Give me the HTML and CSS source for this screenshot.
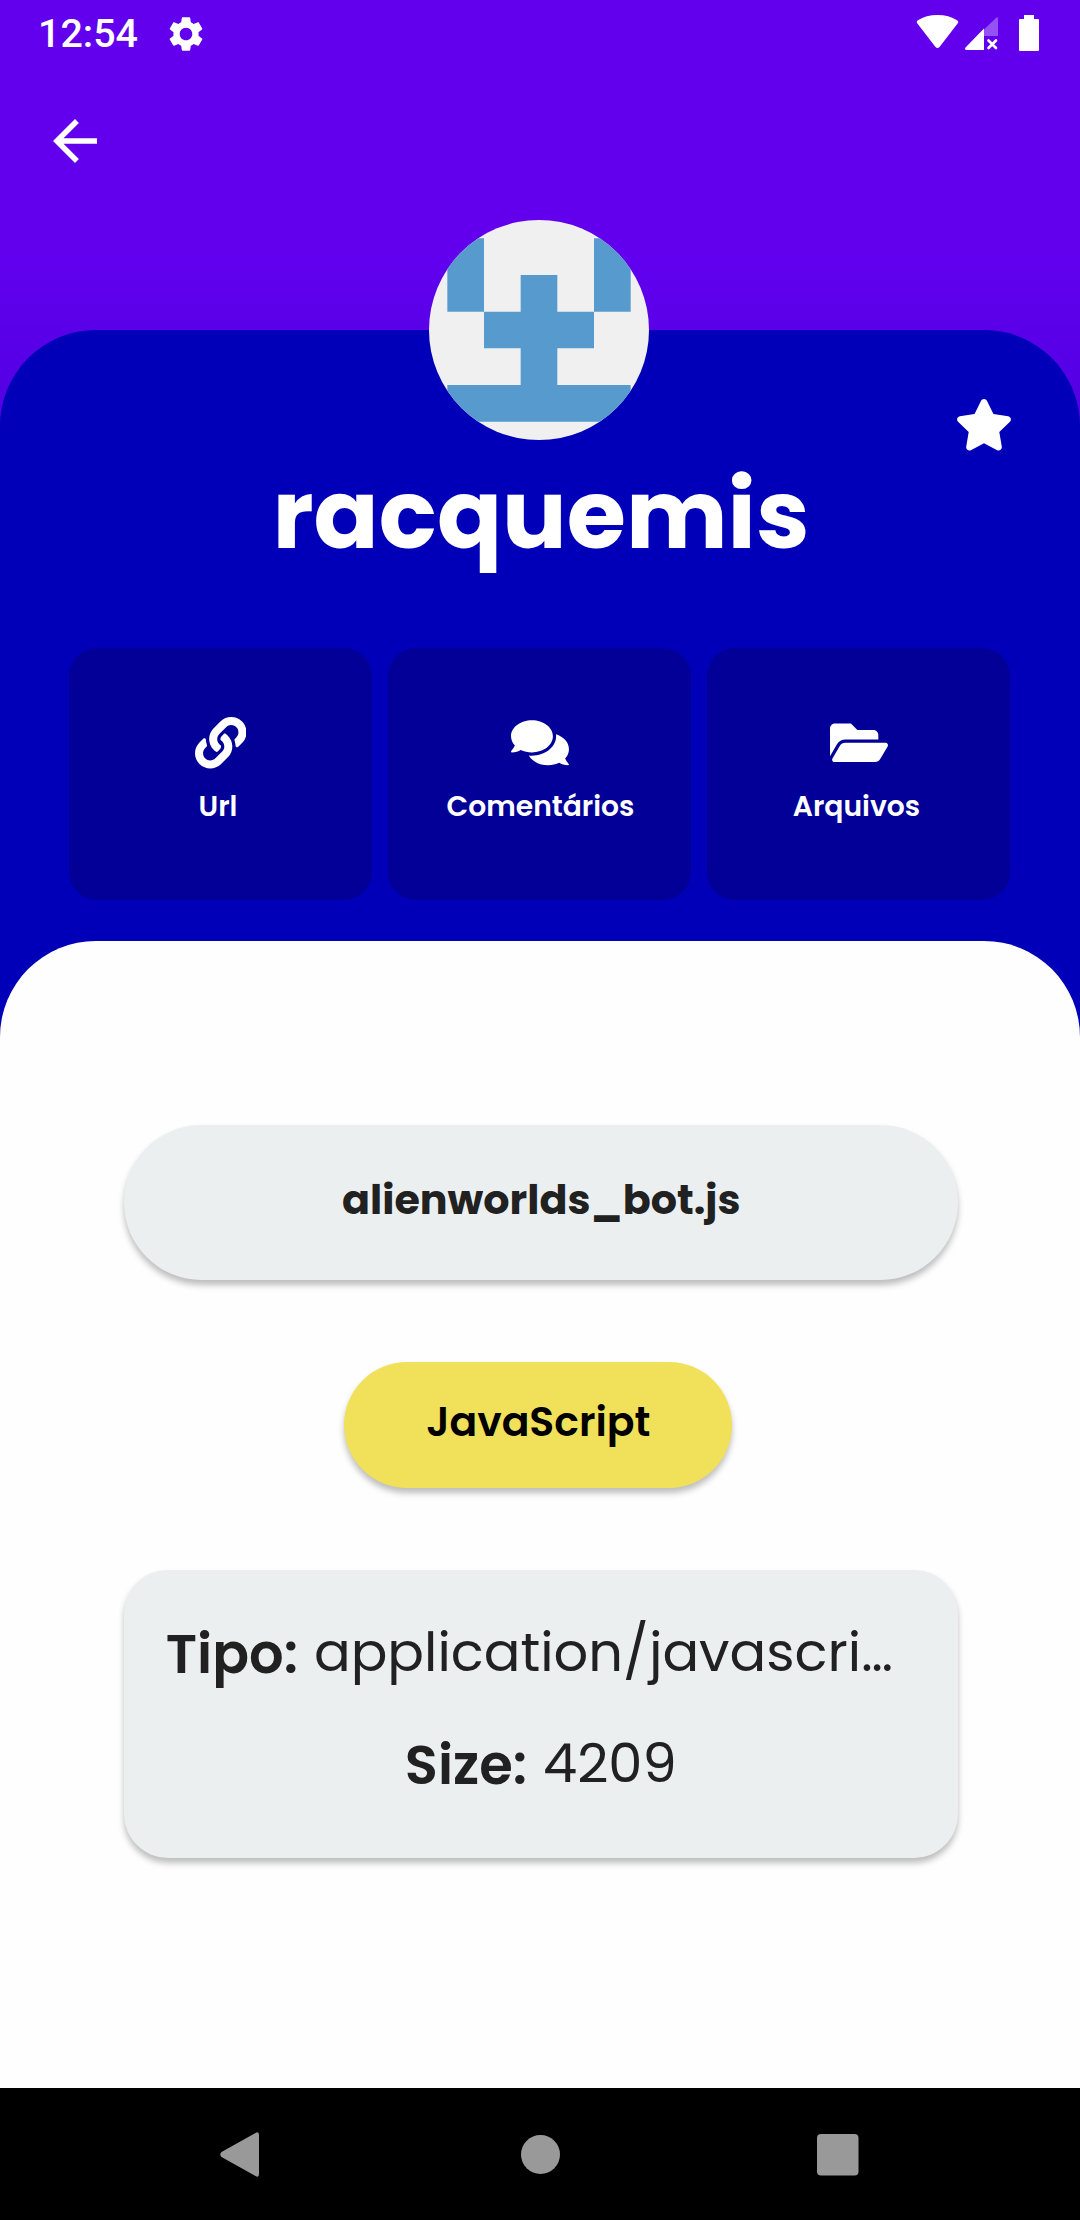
FILE: index.html
```html
<!DOCTYPE html>
<html lang="pt-BR">
<head>
<meta charset="utf-8">
<title>racquemis</title>
<link rel="stylesheet" href="styles.css">
</head>
<body>
<div class="screen">
  <header class="status">
    <span class="clock">12:54</span>
    <svg class="gear" viewBox="0 0 24 24"><path d="M19.14 12.94c.04-.3.06-.61.06-.94 0-.32-.02-.64-.07-.94l2.03-1.58c.18-.14.23-.41.12-.61l-1.92-3.32c-.12-.22-.37-.29-.59-.22l-2.39.96c-.5-.38-1.03-.7-1.62-.94l-.36-2.54c-.04-.24-.24-.41-.48-.41h-3.84c-.24 0-.43.17-.47.41l-.36 2.54c-.59.24-1.13.57-1.62.94l-2.39-.96c-.22-.08-.47 0-.59.22L2.74 8.87c-.12.21-.08.47.12.61l2.03 1.58c-.05.3-.09.63-.09.94s.02.64.07.94l-2.03 1.58c-.18.14-.23.41-.12.61l1.92 3.32c.12.22.37.29.59.22l2.39-.96c.5.38 1.03.7 1.62.94l.36 2.54c.05.24.24.41.48.41h3.84c.24 0 .44-.17.47-.41l.36-2.54c.59-.24 1.13-.56 1.62-.94l2.39.96c.22.08.47 0 .59-.22l1.92-3.32c.12-.22.07-.47-.12-.61l-2.01-1.58zM12 15.6c-1.98 0-3.6-1.62-3.6-3.6s1.62-3.6 3.6-3.6 3.6 1.62 3.6 3.6-1.62 3.6-3.6 3.6z"/></svg>
    <svg class="signals" viewBox="0 0 124 38">
      <path d="M1.4 9.500Q-.2 7.500 2 6.200Q10 1 21.500 1T41 6.200Q43.200 7.500 41.600 9.500L23.500 33Q21.500 35 19.500 33Z"/>
      <path d="M68 15.500L80 4Q82 2 82 5V22H68Z" fill-opacity=".32"/>
      <path d="M68 14.500V36H50Q48 35 50 33Z"/>
      <path d="M72.500 26.500l7.500 7.500m0-7.500l-7.500 7.500" fill="none" stroke="#fff" stroke-width="2.600" stroke-linecap="round"/>
      <path d="M108 1h10v4h4q1 0 1 1v30q0 1-1 1h-18q-1 0-1-1V6q0-1 1-1h4z"/>
    </svg>
  </header>
  <div class="toolbar">
    <svg class="back" viewBox="0 0 24 24"><path d="M20 11H7.830l5.590-5.590L12 4l-8 8 8 8 1.410-1.410L7.830 13H20v-2z"/></svg>
  </div>
  <main class="profile">
    <svg class="avatar" viewBox="0 0 420 420">
      <path fill="#f0f0f0" d="M0 0h420v420H0z"/>
      <path fill="#579ace" d="M35 35h70v140H35zM315 35h70v140h-70zM175 105h70v70h70v70h-70v70h140v70H35v-70h140v-70h-70v-70h70z"/>
    </svg>
    <svg class="star" viewBox="0 0 576 512"><path d="M259.300 17.800L194 150.200 47.900 171.500c-26.200 3.800-36.700 36.100-17.700 54.600l105.700 103-25 145.500c-4.500 26.300 23.200 46 46.400 33.700L288 439.600l130.700 68.700c23.200 12.200 50.900-7.400 46.400-33.700l-25-145.500 105.700-103c19-18.500 8.500-50.800-17.700-54.600L382 150.200 316.700 17.800c-11.700-23.600-45.600-23.900-57.400 0z"/></svg>
    <h1 class="name">racquemis</h1>
    <nav class="tiles">
      <a class="tile">
        <svg class="glyph" viewBox="0 0 512 512"><path d="M326.612 185.391c59.747 59.809 58.927 155.698.36 214.590-.11.120-.24.250-.36.370l-67.200 67.200c-59.270 59.270-155.699 59.262-214.960 0-59.270-59.260-59.270-155.700 0-214.960l37.106-37.106c9.840-9.840 26.786-3.300 27.294 10.606.648 17.722 3.826 35.527 9.690 52.721 1.986 5.822.567 12.262-3.783 16.612l-13.087 13.087c-28.026 28.026-28.905 73.660-1.155 101.960 28.024 28.579 74.086 28.749 102.325.510l67.200-67.190c28.191-28.191 28.073-73.757 0-101.830-3.701-3.694-7.429-6.564-10.341-8.569a16.037 16.037 0 0 1-6.947-12.606c-.396-10.567 3.348-21.456 11.698-29.806l21.054-21.055c5.521-5.521 14.182-6.199 20.584-1.731a152.482 152.482 0 0 1 20.522 17.197zM467.547 44.449c-59.261-59.262-155.690-59.270-214.960 0l-67.200 67.200c-.12.120-.25.250-.36.370-58.566 58.892-59.387 154.781.36 214.590a152.454 152.454 0 0 0 20.521 17.196c6.402 4.468 15.064 3.789 20.584-1.731l21.054-21.055c8.350-8.350 12.094-19.239 11.698-29.806a16.037 16.037 0 0 0-6.947-12.606c-2.912-2.005-6.640-4.875-10.341-8.569-28.073-28.073-28.191-73.639 0-101.830l67.200-67.190c28.239-28.239 74.300-28.069 102.325.510 27.750 28.300 26.872 73.934-1.155 101.960l-13.087 13.087c-4.350 4.350-5.769 10.790-3.783 16.612 5.864 17.194 9.042 34.999 9.690 52.721.509 13.906 17.454 20.446 27.294 10.606l37.106-37.106c59.271-59.259 59.271-155.699.001-214.959z"/></svg>
        <span class="label label-url">Url</span>
      </a>
      <a class="tile">
        <svg class="glyph wide" viewBox="0 0 576 512"><path d="M416 192c0-88.400-93.100-160-208-160S0 103.600 0 192c0 34.300 14.100 65.900 38 92-13.400 30.200-35.500 54.200-35.800 54.500-2.200 2.300-2.800 5.700-1.500 8.700S4.800 352 8 352c36.600 0 66.900-12.300 88.700-25 32.200 15.700 70.300 25 111.300 25 114.900 0 208-71.600 208-160zm122 220c23.900-26 38-57.700 38-92 0-66.900-53.500-124.200-129.300-148.100.9 6.600 1.300 13.300 1.300 20.100 0 105.900-107.700 192-240 192-10.800 0-21.300-.8-31.700-1.900C207.800 439.600 281.800 480 368 480c41 0 79.100-9.200 111.300-25 21.800 12.700 52.100 25 88.700 25 3.200 0 6.100-1.900 7.300-4.800 1.300-2.900.7-6.300-1.500-8.700-.3-.3-22.400-24.200-35.800-54.500z"/></svg>
        <span class="label">Comentários</span>
      </a>
      <a class="tile">
        <svg class="glyph wide" viewBox="0 0 576 512"><path d="M572.694 292.093L500.270 416.248A63.997 63.997 0 0 1 444.989 448H45.025c-18.523 0-30.064-20.093-20.731-36.093l72.424-124.155A64 64 0 0 1 152 256h399.964c18.523 0 30.064 20.093 20.730 36.093zM152 224h328v-48c0-26.510-21.490-48-48-48H272l-64-64H48C21.490 64 0 85.490 0 112v278.046l69.077-118.418C86.214 242.250 117.989 224 152 224z"/></svg>
        <span class="label label-arq">Arquivos</span>
      </a>
    </nav>
    <section class="sheet">
      <div class="file">alienworlds_bot.js</div>
      <div class="lang">JavaScript</div>
      <div class="info">
        <p class="row row-type"><b>Tipo:</b><span>application/javascri…</span></p>
        <p class="row"><b>Size:</b><span>4209</span></p>
      </div>
    </section>
  </main>
  <footer class="navbar">
    <svg viewBox="0 0 1080 132">
      <path d="M255.500 45Q259 43 259 47V86Q259 90 255.500 88L221.500 69Q219 66.500 221.500 64Z"/>
      <circle cx="540.500" cy="66.500" r="19.500"/>
      <rect x="817" y="46" width="41.500" height="41.500" rx="4"/>
    </svg>
  </footer>
</div>
</body>
</html>
```
FILE: styles.css
```css
* { box-sizing: border-box; }
body { margin: 0; font-family: Poppins, Inter, sans-serif; }
svg { display: block; fill: #fff; flex: none; }
.screen { width: 1080px; height: 2220px; display: flex; flex-direction: column; overflow: hidden; background: linear-gradient(#6200ee 250px, #5000e2 430px, #0100b8 600px); }
.status { flex: none; height: 66px; display: flex; align-items: flex-start; padding: 0 40px 0 38px; color: #fff; }
.clock { font: 500 39.4px/68px Roboto, sans-serif; margin-right: 27px; }
.gear { width: 42px; height: 42px; margin-top: 13px; }
.signals { width: 124px; height: 38px; margin: 14px 0 0 auto; }
.toolbar { flex: none; height: 154px; padding: 42px; }
.back { width: 66px; height: 66px; }
.profile { position: relative; flex: 1; margin-top: 110px; border-radius: 96px 96px 0 0; background: #0100b8; display: flex; flex-direction: column; }
.avatar { position: absolute; left: 429px; top: -110px; width: 220px; height: 220px; border-radius: 50%; }
.star { position: absolute; left: 955px; top: 69px; width: 58px; height: 51.5px; }
.name { margin: 110px 0 0; height: 160px; padding-left: 2px; color: #fff; text-align: center; font-size: 96px; line-height: 149px; font-weight: 700; }
.tiles { display: flex; gap: 16px; margin: 48px 70px 0 69px; height: 252px; }
.tile { flex: 1; border-radius: 28px; background: #020097; display: flex; flex-direction: column; align-items: center; padding-top: 69px; }
.glyph { width: 51.5px; height: 51.5px; }
.wide { width: 58px; }
.label { color: #fff; font-size: 28.2px; font-weight: 600; line-height: 40px; margin-top: 17px; padding-left: 2px; }
.label-url { padding: 0 5px 0 0; }
.label-arq { padding: 0 4px 0 0; }
.sheet { margin-top: 41px; flex: 1; border-radius: 96px 96px 0 0; background: #fefefe; padding: 184px 122.500px 0 124px; display: flex; flex-direction: column; align-items: center; color: #212121; }
.file, .info { width: 100%; background: #ebeff0; box-shadow: 0 5px 6px rgba(0,0,0,.26); }
.file { height: 155px; border-radius: 78px; text-align: center; font-weight: 700; font-size: 41.25px; line-height: 149px; padding-left: 1px; }
.lang { margin: 82px 5px 0 0; width: 388px; height: 126px; border-radius: 63px; background: #f1e05a; color: #000; font-weight: 600; font-size: 40.9px; line-height: 119px; text-align: center; box-shadow: 0 5px 6px rgba(0,0,0,.26); }
.info { margin-top: 82px; height: 288px; border-radius: 44px; padding-top: 29px; font-size: 54.3px; }
.row { margin: 0; height: 111px; line-height: 111px; display: flex; justify-content: center; gap: 16px; }
.row-type { padding-right: 23px; }
.row b { font-weight: 600; }
.row span { line-height: 107px; }
.navbar { flex: none; height: 132px; background: #000; }
.navbar svg { width: 1080px; height: 132px; fill: #999; }
```
